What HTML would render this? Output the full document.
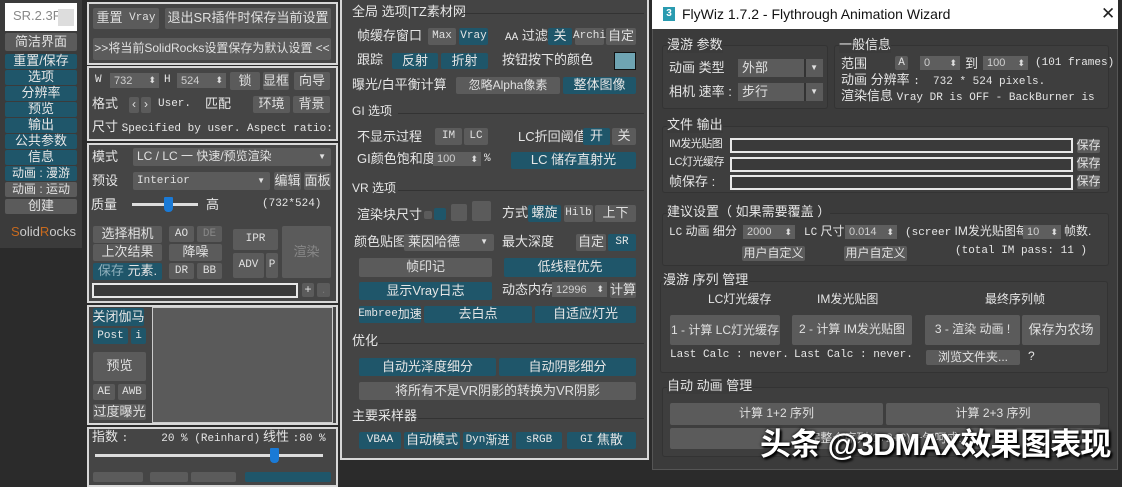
<!DOCTYPE html>
<html><head><meta charset="utf-8"><style>
*{margin:0;padding:0;box-sizing:border-box}
body{width:1122px;height:478px;overflow:hidden;background:#2b2b2b;position:relative;font:12px "Liberation Sans","Noto Sans CJK SC",sans-serif;color:#e6e6e6}
.a{position:absolute;white-space:nowrap;line-height:1.2}
.b{position:absolute;display:flex;align-items:center;justify-content:center;white-space:nowrap;border-radius:2px;background:#5b5b5b;color:#e0e0e0;font-size:12px;line-height:1.1}
.t{background:#1f566a;color:#e6e6e6}
.d{color:#888}
.m{font-family:"Liberation Mono","Noto Sans CJK SC",monospace;font-size:11px}
.p{position:absolute;border:2px solid #d8d8d8;background:#454545}
.sp{position:absolute;background:#5e5e5e;color:#cfcfcf;font-size:11px;padding-left:4px;display:flex;align-items:center}
.sp:after{content:"⬍";position:absolute;right:3px;font-size:9px;color:#ddd}
.hd{position:absolute;height:1px;background:#5a5a5a;border-bottom:1px solid #333}
.in{position:absolute;border:2px solid #e8e8e8;background:#3a3a3a}
.g{position:absolute;border:1px solid #333;border-radius:3px;background:#3e3e3e}
</style></head><body>

<!-- left sidebar -->
<div class="a" style="left:0;top:0;width:82px;height:248px;background:#3b3b3b"></div>
<div class="a" style="left:5px;top:3px;width:72px;height:28px;background:#fff"></div>
<div class="a" style="left:13px;top:8px;color:#888;font-size:13px">SR.2.3F</div>
<div class="a" style="left:58px;top:9px;width:16px;height:17px;background:#ddd"></div>
<div class="b" style="left:5px;top:33px;width:72px;height:18px;font-size:13px">简洁界面</div>
<div class="b t" style="left:5px;top:54px;width:72px;height:15px;font-size:13px">重置/保存</div>
<div class="b t" style="left:5px;top:70px;width:72px;height:15px;font-size:13px">选项</div>
<div class="b t" style="left:5px;top:86px;width:72px;height:15px;font-size:13px">分辨率</div>
<div class="b t" style="left:5px;top:102px;width:72px;height:15px;font-size:13px">预览</div>
<div class="b t" style="left:5px;top:118px;width:72px;height:15px;font-size:13px">输出</div>
<div class="b t" style="left:5px;top:134px;width:72px;height:15px;font-size:13px">公共参数</div>
<div class="b t" style="left:5px;top:150px;width:72px;height:15px;font-size:13px">信息</div>
<div class="b t" style="left:5px;top:166px;width:72px;height:15px;font-size:12px">动画 : 漫游</div>
<div class="b" style="left:5px;top:182px;width:72px;height:15px;font-size:12px">动画 : 运动</div>
<div class="b" style="left:5px;top:199px;width:72px;height:15px;font-size:13px">创建</div>
<div class="a" style="left:11px;top:224px;font-size:13px;color:#ccc"><span style="color:#c86a1e">S</span>olid<span style="color:#c86a1e">R</span>ocks</div>

<!-- column 2 -->
<div class="p" style="left:87px;top:2px;width:251px;height:63px"></div>
<div class="b" style="left:93px;top:8px;width:66px;height:21px;font-size:13px">重置 <span class="m">&nbsp;Vray</span></div>
<div class="b" style="left:165px;top:8px;width:166px;height:21px;font-size:13px">退出SR插件时保存当前设置</div>
<div class="b" style="left:93px;top:38px;width:238px;height:22px;font-size:12px">&gt;&gt;将当前SolidRocks设置保存为默认设置 &lt;&lt;</div>

<div class="p" style="left:87px;top:66px;width:251px;height:75px"></div>
<div class="a m" style="left:95px;top:74px">W</div>
<div class="sp" style="left:110px;top:73px;width:49px;height:15px">732</div>
<div class="a m" style="left:164px;top:74px">H</div>
<div class="sp" style="left:177px;top:73px;width:49px;height:15px">524</div>
<div class="b" style="left:230px;top:72px;width:30px;height:18px;font-size:13px">锁</div>
<div class="b" style="left:263px;top:72px;width:26px;height:18px;font-size:13px">显框</div>
<div class="b" style="left:294px;top:72px;width:36px;height:18px;font-size:13px">向导</div>
<div class="a" style="left:92px;top:96px;font-size:13px">格式</div>
<div class="b" style="left:129px;top:97px;width:10px;height:16px">‹</div>
<div class="b" style="left:141px;top:97px;width:10px;height:16px">›</div>
<div class="a m" style="left:158px;top:98px">User.</div>
<div class="a" style="left:205px;top:96px;font-size:13px">匹配</div>
<div class="b" style="left:253px;top:96px;width:37px;height:17px;font-size:13px">环境</div>
<div class="b" style="left:293px;top:96px;width:37px;height:17px;font-size:13px">背景</div>
<div class="a" style="left:92px;top:119px;font-size:13px">尺寸 <span class="m">Specified by user. Aspect ratio: :</span></div>

<div class="p" style="left:87px;top:143px;width:251px;height:160px"></div>
<div class="a" style="left:92px;top:149px;font-size:13px">模式</div>
<div class="b" style="left:133px;top:148px;width:198px;height:18px;justify-content:flex-start;padding-left:4px;font-size:12px">LC / LC 一 快速/预览渲染<span style="position:absolute;right:5px;font-size:8px">▼</span></div>
<div class="a" style="left:92px;top:173px;font-size:13px">预设</div>
<div class="b" style="left:133px;top:172px;width:137px;height:18px;justify-content:flex-start;padding-left:4px"><span class="m">Interior</span><span style="position:absolute;right:5px;font-size:8px">▼</span></div>
<div class="b" style="left:274px;top:172px;width:27px;height:18px;font-size:13px">编辑</div>
<div class="b" style="left:304px;top:172px;width:27px;height:18px;font-size:13px">面板</div>
<div class="a" style="left:91px;top:197px;font-size:13px">质量</div>
<div class="a" style="left:132px;top:203px;width:66px;height:3px;background:#ddd"></div>
<div class="a" style="left:164px;top:197px;width:9px;height:15px;background:#1a7ad6;border-radius:1px 1px 4px 4px"></div>
<div class="a" style="left:206px;top:197px;font-size:13px">高</div>
<div class="a m" style="left:262px;top:198px">(732*524)</div>
<div class="b" style="left:93px;top:226px;width:69px;height:17px;font-size:13px">选择相机</div>
<div class="b m" style="left:169px;top:226px;width:25px;height:16px">AO</div>
<div class="b m d" style="left:197px;top:226px;width:25px;height:16px">DE</div>
<div class="b m" style="left:233px;top:229px;width:45px;height:21px">IPR</div>
<div class="b d" style="left:282px;top:226px;width:49px;height:52px;font-size:13px">渲染</div>
<div class="b" style="left:93px;top:244px;width:69px;height:17px;font-size:13px">上次结果</div>
<div class="b" style="left:169px;top:244px;width:53px;height:17px;font-size:13px">降噪</div>
<div class="b m" style="left:233px;top:253px;width:31px;height:25px">ADV</div>
<div class="b m" style="left:266px;top:253px;width:12px;height:25px">P</div>
<div class="b t" style="left:93px;top:263px;width:69px;height:17px;font-size:13px"><span style="color:#8fb0bc">保存</span>&nbsp;元素.</div>
<div class="b m" style="left:169px;top:263px;width:25px;height:16px">DR</div>
<div class="b m" style="left:197px;top:263px;width:25px;height:16px">BB</div>
<div class="in" style="left:92px;top:283px;width:206px;height:15px"></div>
<div class="b" style="left:302px;top:283px;width:12px;height:14px">+</div>
<div class="b" style="left:317px;top:283px;width:13px;height:14px;color:#777">.</div>

<div class="p" style="left:87px;top:305px;width:251px;height:120px"></div>
<div class="b t" style="left:93px;top:308px;width:51px;height:18px;font-size:13px">关闭伽马</div>
<div class="b t m" style="left:93px;top:328px;width:35px;height:16px">Post</div>
<div class="b t m" style="left:131px;top:328px;width:15px;height:16px">i</div>
<div class="a" style="left:152px;top:307px;width:181px;height:116px;background:#5a5a5a;border:1px solid #ccc"></div>
<div class="b" style="left:93px;top:352px;width:53px;height:29px;font-size:13px">预览</div>
<div class="b m" style="left:93px;top:384px;width:22px;height:16px">AE</div>
<div class="b m" style="left:118px;top:384px;width:28px;height:16px">AWB</div>
<div class="b" style="left:93px;top:404px;width:53px;height:16px;font-size:13px">过度曝光</div>

<div class="p" style="left:87px;top:427px;width:251px;height:60px"></div>
<div class="a" style="left:92px;top:429px;font-size:13px">指数 <span class="m">:&nbsp;&nbsp;&nbsp;&nbsp; 20 % (Reinhard)</span></div>
<div class="a" style="left:263px;top:429px;font-size:13px">线性 <span class="m">:80 %</span></div>
<div class="a" style="left:95px;top:454px;width:228px;height:3px;background:#ddd"></div>
<div class="a" style="left:270px;top:448px;width:9px;height:15px;background:#1a7ad6;border-radius:1px 1px 4px 4px"></div>
<div class="b" style="left:93px;top:472px;width:50px;height:10px"></div>
<div class="b" style="left:150px;top:472px;width:38px;height:10px"></div>
<div class="b" style="left:191px;top:472px;width:45px;height:10px"></div>
<div class="b t" style="left:245px;top:472px;width:86px;height:10px"></div>

<!-- column 3 -->
<div class="p" style="left:340px;top:-2px;width:309px;height:462px;background:#444"></div>
<div class="a" style="left:352px;top:4px;font-size:13px">全局 选项|TZ素材网</div>
<div class="hd" style="left:462px;top:13px;width:182px"></div>
<div class="a" style="left:357px;top:28px;font-size:13px">帧缓存窗口</div>
<div class="b m" style="left:428px;top:28px;width:28px;height:17px">Max</div>
<div class="b t m" style="left:459px;top:28px;width:29px;height:17px">Vray</div>
<div class="a" style="left:505px;top:28px;font-size:13px"><span class="m">AA</span> 过滤</div>
<div class="b t" style="left:548px;top:28px;width:24px;height:17px;font-size:13px">关</div>
<div class="b m" style="left:575px;top:28px;width:29px;height:17px">Archi</div>
<div class="b" style="left:606px;top:28px;width:30px;height:17px;font-size:13px">自定</div>
<div class="a" style="left:357px;top:52px;font-size:13px">跟踪</div>
<div class="b t" style="left:392px;top:53px;width:46px;height:16px;font-size:13px">反射</div>
<div class="b t" style="left:441px;top:53px;width:47px;height:16px;font-size:13px">折射</div>
<div class="a" style="left:502px;top:52px;font-size:13px">按钮按下的颜色</div>
<div class="a" style="left:614px;top:52px;width:22px;height:18px;background:#6fa4b3;border:1px solid #111"></div>
<div class="a" style="left:352px;top:77px;font-size:13px">曝光/白平衡计算</div>
<div class="b" style="left:456px;top:77px;width:104px;height:17px;font-size:12px">忽略Alpha像素</div>
<div class="b t" style="left:563px;top:77px;width:73px;height:17px;font-size:13px">整体图像</div>
<div class="a" style="left:352px;top:104px;font-size:12px">GI 选项</div>
<div class="hd" style="left:398px;top:113px;width:246px"></div>
<div class="a" style="left:357px;top:129px;font-size:13px">不显示过程</div>
<div class="b m" style="left:435px;top:128px;width:27px;height:17px">IM</div>
<div class="b m" style="left:464px;top:128px;width:24px;height:17px">LC</div>
<div class="a" style="left:518px;top:129px;font-size:13px">LC折回阈值</div>
<div class="b t" style="left:583px;top:128px;width:27px;height:17px;font-size:13px">开</div>
<div class="b" style="left:612px;top:128px;width:24px;height:17px;font-size:13px">关</div>
<div class="a" style="left:357px;top:151px;font-size:13px">GI颜色饱和度</div>
<div class="sp" style="left:433px;top:152px;width:48px;height:14px">100</div>
<div class="a m" style="left:484px;top:153px">%</div>
<div class="b t" style="left:511px;top:152px;width:125px;height:17px;font-size:13px">LC 储存直射光</div>
<div class="a" style="left:352px;top:181px;font-size:12px">VR 选项</div>
<div class="hd" style="left:398px;top:190px;width:246px"></div>
<div class="b" style="left:424px;top:211px;width:8px;height:8px"></div>
<div class="b t" style="left:434px;top:208px;width:12px;height:12px"></div>
<div class="b" style="left:451px;top:204px;width:16px;height:17px"></div>
<div class="b" style="left:472px;top:201px;width:19px;height:20px"></div>
<div class="a" style="left:357px;top:207px;font-size:13px">渲染块尺寸</div>
<div class="a" style="left:502px;top:205px;font-size:13px">方式</div>
<div class="b t" style="left:528px;top:205px;width:33px;height:17px;font-size:13px">螺旋</div>
<div class="b m" style="left:564px;top:205px;width:29px;height:17px">Hilb</div>
<div class="b" style="left:595px;top:205px;width:41px;height:17px;font-size:13px">上下</div>
<div class="a" style="left:354px;top:234px;font-size:13px">颜色贴图</div>
<div class="b" style="left:404px;top:234px;width:90px;height:17px;justify-content:flex-start;padding-left:4px;font-size:13px">莱因哈德<span style="position:absolute;right:6px;font-size:8px">▼</span></div>
<div class="a" style="left:502px;top:234px;font-size:13px">最大深度</div>
<div class="b" style="left:576px;top:234px;width:30px;height:17px;font-size:13px">自定</div>
<div class="b t m" style="left:608px;top:234px;width:28px;height:17px">SR</div>
<div class="b" style="left:359px;top:258px;width:133px;height:19px;font-size:13px">帧印记</div>
<div class="b t" style="left:504px;top:258px;width:132px;height:19px;font-size:13px">低线程优先</div>
<div class="b t" style="left:359px;top:282px;width:133px;height:18px;font-size:13px">显示Vray日志</div>
<div class="a" style="left:502px;top:282px;font-size:13px">动态内存</div>
<div class="sp" style="left:552px;top:282px;width:55px;height:15px">12996</div>
<div class="b" style="left:610px;top:282px;width:26px;height:16px;font-size:13px">计算</div>
<div class="b t" style="left:359px;top:306px;width:62px;height:17px;font-size:12px"><span class="m">Embree</span>加速</div>
<div class="b t" style="left:424px;top:306px;width:108px;height:17px;font-size:13px">去白点</div>
<div class="b t" style="left:535px;top:306px;width:101px;height:17px;font-size:13px">自适应灯光</div>
<div class="a" style="left:352px;top:333px;font-size:13px">优化</div>
<div class="hd" style="left:378px;top:343px;width:266px"></div>
<div class="b t" style="left:359px;top:358px;width:137px;height:18px;font-size:13px">自动光泽度细分</div>
<div class="b t" style="left:499px;top:358px;width:137px;height:18px;font-size:13px">自动阴影细分</div>
<div class="b" style="left:359px;top:382px;width:277px;height:18px;font-size:13px">将所有不是VR阴影的转换为VR阴影</div>
<div class="a" style="left:352px;top:408px;font-size:13px">主要采样器</div>
<div class="hd" style="left:418px;top:418px;width:226px"></div>
<div class="b t m" style="left:359px;top:432px;width:42px;height:17px">VBAA</div>
<div class="b t" style="left:404px;top:432px;width:56px;height:17px;font-size:13px">自动模式</div>
<div class="b t" style="left:463px;top:432px;width:49px;height:17px;font-size:12px"><span class="m">Dyn</span>渐进</div>
<div class="b t m" style="left:516px;top:432px;width:46px;height:17px">sRGB</div>
<div class="b t" style="left:567px;top:432px;width:69px;height:17px;font-size:13px"><span class="m">GI</span>&nbsp;焦散</div>

<!-- right window -->
<div class="a" style="left:652px;top:0;width:466px;height:470px;background:#3b3b3b;border:1px solid #555"></div>
<div class="a" style="left:652px;top:0;width:466px;height:29px;background:#fff"></div>
<div class="a" style="left:663px;top:7px;width:12px;height:14px;background:#2a9bb0;color:#fff;font-size:10px;font-weight:bold;text-align:center;line-height:14px">3</div>
<div class="a" style="left:682px;top:6px;color:#111;font-size:14px">FlyWiz 1.7.2 - Flythrough Animation Wizard</div>
<div class="a" style="left:1101px;top:4px;color:#222;font-size:17px">✕</div>

<div class="g" style="left:662px;top:45px;width:166px;height:64px"></div>
<div class="a" style="left:667px;top:37px;font-size:13px;background:#3b3b3b">漫游 参数</div>
<div class="a" style="left:669px;top:60px;font-size:13px">动画 类型</div>
<div class="b" style="left:738px;top:59px;width:85px;height:18px;justify-content:flex-start;padding-left:4px;font-size:13px;border-radius:0">外部<span style="position:absolute;left:66px;top:0;width:2px;height:18px;background:#333"></span><span style="position:absolute;right:5px;font-size:8px">▼</span></div>
<div class="a" style="left:669px;top:84px;font-size:13px">相机 速率 :</div>
<div class="b" style="left:738px;top:83px;width:85px;height:18px;justify-content:flex-start;padding-left:4px;font-size:13px;border-radius:0">步行<span style="position:absolute;left:66px;top:0;width:2px;height:18px;background:#333"></span><span style="position:absolute;right:5px;font-size:8px">▼</span></div>

<div class="g" style="left:834px;top:45px;width:275px;height:64px"></div>
<div class="a" style="left:839px;top:37px;font-size:13px;background:#3b3b3b">一般信息</div>
<div class="a" style="left:841px;top:56px;font-size:13px">范围</div>
<div class="b m" style="left:895px;top:56px;width:13px;height:14px">A</div>
<div class="sp" style="left:920px;top:56px;width:40px;height:14px">0</div>
<div class="a" style="left:965px;top:56px;font-size:13px">到</div>
<div class="sp" style="left:983px;top:56px;width:45px;height:14px">100</div>
<div class="a m" style="left:1035px;top:57px">(101 frames)</div>
<div class="a" style="left:841px;top:72px;font-size:13px">动画 分辨率 <span class="m">:&nbsp; 732 * 524 pixels.</span></div>
<div class="a" style="left:841px;top:88px;font-size:13px">渲染信息 <span class="m">Vray DR is OFF - BackBurner is</span></div>

<div class="g" style="left:662px;top:126px;width:447px;height:67px"></div>
<div class="a" style="left:667px;top:117px;font-size:13px;background:#3b3b3b">文件 输出</div>
<div class="a" style="left:669px;top:138px;font-size:11px;letter-spacing:-0.5px">IM发光贴图</div>
<div class="in" style="left:730px;top:138px;width:343px;height:15px"></div>
<div class="b" style="left:1077px;top:139px;width:23px;height:14px;font-size:12px">保存</div>
<div class="a" style="left:669px;top:156px;font-size:11px;letter-spacing:-0.5px">LC灯光缓存</div>
<div class="in" style="left:730px;top:157px;width:343px;height:15px"></div>
<div class="b" style="left:1077px;top:157px;width:23px;height:14px;font-size:12px">保存</div>
<div class="a" style="left:669px;top:174px;font-size:13px">帧保存 :</div>
<div class="in" style="left:730px;top:175px;width:343px;height:15px"></div>
<div class="b" style="left:1077px;top:175px;width:23px;height:14px;font-size:12px">保存</div>

<div class="g" style="left:662px;top:213px;width:447px;height:53px"></div>
<div class="a" style="left:667px;top:204px;font-size:13px;background:#3b3b3b">建议设置（ 如果需要覆盖 ）</div>
<div class="a" style="left:669px;top:224px;font-size:12px"><span class="m">LC</span> 动画 细分</div>
<div class="sp" style="left:743px;top:225px;width:52px;height:14px">2000</div>
<div class="a" style="left:804px;top:224px;font-size:12px"><span class="m">LC</span> 尺寸</div>
<div class="sp" style="left:845px;top:225px;width:52px;height:14px">0.014</div>
<div class="a" style="left:905px;top:224px;font-size:12px"><span class="m">(screer</span> IM发光贴图每</div>
<div class="sp" style="left:1023px;top:225px;width:38px;height:14px">10</div>
<div class="a" style="left:1064px;top:224px;font-size:12px">帧数.</div>
<div class="b" style="left:742px;top:246px;width:63px;height:15px;font-size:12px">用户自定义</div>
<div class="b" style="left:844px;top:246px;width:63px;height:15px;font-size:12px">用户自定义</div>
<div class="a m" style="left:955px;top:245px">(total IM pass: 11 )</div>

<div class="g" style="left:660px;top:281px;width:448px;height:92px"></div>
<div class="a" style="left:663px;top:272px;font-size:13px;background:#3b3b3b">漫游 序列 管理</div>
<div class="a" style="left:708px;top:292px;font-size:12px">LC灯光缓存</div>
<div class="a" style="left:817px;top:292px;font-size:12px">IM发光贴图</div>
<div class="a" style="left:985px;top:292px;font-size:12px">最终序列帧</div>
<div class="b" style="left:670px;top:315px;width:110px;height:30px;font-size:12px;line-height:14px;white-space:normal;text-align:center">1 - 计算 LC灯光缓存</div>
<div class="b" style="left:792px;top:315px;width:120px;height:30px;font-size:12px">2 - 计算 IM发光贴图</div>
<div class="b" style="left:925px;top:315px;width:95px;height:30px;font-size:12px">3 - 渲染 动画 !</div>
<div class="b" style="left:1022px;top:315px;width:78px;height:30px;font-size:13px">保存为农场</div>
<div class="a m" style="left:670px;top:349px">Last Calc : never.</div>
<div class="a m" style="left:794px;top:349px">Last Calc : never.</div>
<div class="b" style="left:926px;top:350px;width:94px;height:15px;font-size:12px">浏览文件夹...</div>
<div class="a" style="left:1028px;top:349px">?</div>

<div class="g" style="left:662px;top:387px;width:447px;height:70px"></div>
<div class="a" style="left:667px;top:378px;font-size:13px;background:#3b3b3b">自动 动画 管理</div>
<div class="b" style="left:670px;top:403px;width:213px;height:22px;font-size:12px">计算 1+2 序列</div>
<div class="b" style="left:886px;top:403px;width:214px;height:22px;font-size:12px">计算 2+3 序列</div>
<div class="b" style="left:670px;top:428px;width:430px;height:21px;font-size:12px">完整个序列(1+2+3)一气呵成!</div>
<div class="a" style="left:760px;top:426px;font-size:31px;font-weight:bold;color:#fff;text-shadow:2px 2px 2px #000,0 0 3px #000;letter-spacing:-1px">头条 @3DMAX效果图表现</div>
</body></html>
